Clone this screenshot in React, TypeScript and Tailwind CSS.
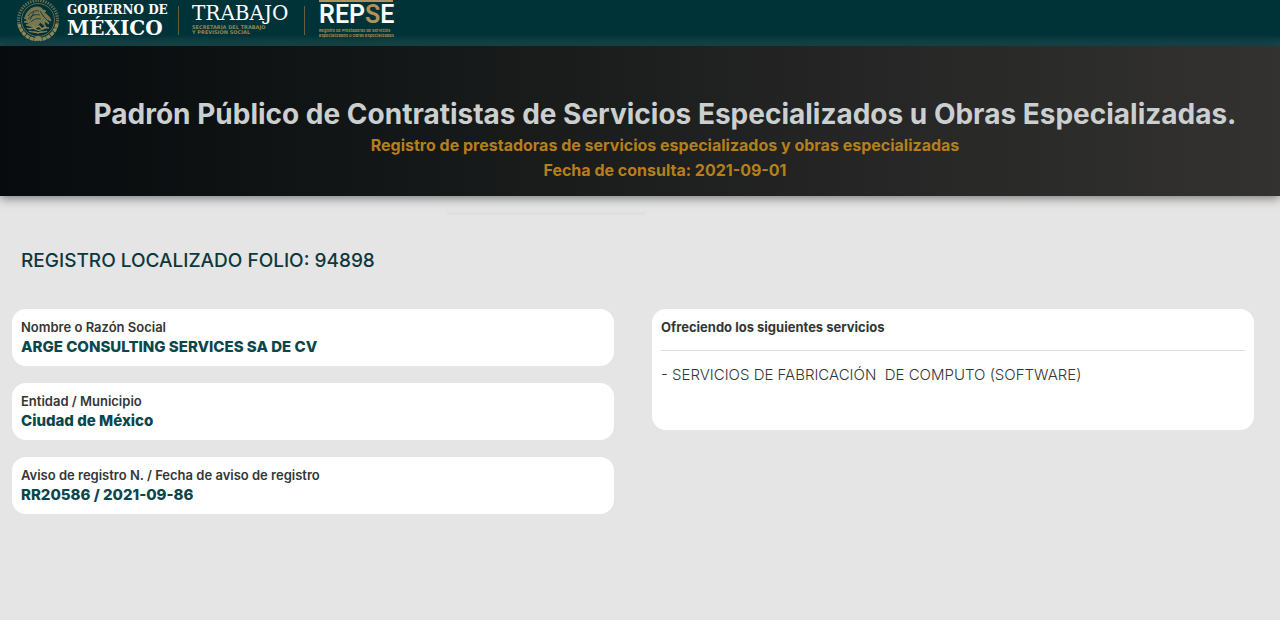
import React from 'react';

interface Field {
  label: string;
  value: string;
}

const fields: Field[] = [
  { label: 'Nombre o Razón Social', value: 'ARGE CONSULTING SERVICES SA DE CV' },
  { label: 'Entidad / Municipio', value: 'Ciudad de México' },
  { label: 'Aviso de registro N. / Fecha de aviso de registro', value: 'RR20586 / 2021-09-86' },
];

const services = ['SERVICIOS DE FABRICACIÓN\u00a0 DE COMPUTO (SOFTWARE)'];

function Seal() {
  return (
    <svg viewBox="0 0 44 44" className="size-11 shrink-0" fill="none" stroke="#8c8455" aria-hidden="true">
      <circle cx="22" cy="22" r="19.5" strokeWidth="3" strokeDasharray="1.4 1.2" opacity="0.75" />
      <circle cx="22" cy="22" r="16.5" strokeWidth="0.7" />
      {/* laurel */}
      <path d="M3 26c2 9 9 15 17 15.500M41 26c-2 9-9 15-17 15.500" strokeWidth="3.400" strokeDasharray="3.600 1" />
      <path d="M19 40l3-2 3 2-3 3z" fill="#8c8455" />
      {/* eagle */}
      <path
        d="M9 20c1-6 6-11 12-11 3 0 5 1 6 3l3 1-2 2c3 1 6 4 7 8l-4-2 2 5-5-3 1 5-5-4c-1 3-4 5-7 5l-7-2 4-2-6-1 4-2-4-2z"
        fill="#8c8455"
        opacity="0.85"
      />
      <path d="M12 18c3-4 7-6 11-5M12 21c4-4 8-5 12-4M15 24c3-3 6-4 10-3M24 13l4 6 5 5M18 14l-4 8" stroke="#12393b" strokeWidth="0.9" />
      <path d="M11 30c3 2 5-1 8 1s5 2 8 0 4-1 6-1M13 33c3 2 6 0 9 2 3-2 6 0 9-2M16 27l3 3 4-2 3 3 4-3" strokeWidth="1.500" />
    </svg>
  );
}

function Divider() {
  return <span className="h-[29px] w-px bg-[#62603f]" />;
}

function Brand() {
  return (
    <header className="h-[46px] bg-linear-to-b from-[#003338] from-75% to-[#1d4c50] text-white">
      <div className="flex h-10 items-center pl-4">
        <Seal />
        <div className="ml-[7px] w-[97px] whitespace-nowrap font-['DejaVu_Serif',serif] font-bold">
          <p className="text-[12px] leading-4">GOBIERNO DE</p>
          <p className="text-[20px] leading-5">MÉXICO</p>
        </div>
        <div className="ml-[14px] flex items-center">
          <Divider />
        </div>
        <div className="ml-[13px] w-[100px] whitespace-nowrap pb-1">
          <p className="font-['DejaVu_Serif',serif] text-[20px] leading-6">TRABAJO</p>
          <p className="font-['DejaVu_Sans',sans-serif] text-[5px] font-bold leading-[5px] text-[#8c8455]">
            SECRETARÍA DEL TRABAJO
            <br />
            Y PREVISIÓN SOCIAL
          </p>
        </div>
        <div className="ml-3 flex items-center">
          <Divider />
        </div>
        <div className="ml-[14px] w-[74px] whitespace-nowrap border-t-2 border-[#b0935b] pb-0.5">
          <p className="font-[Roboto,sans-serif] text-[25px] font-semibold leading-[26px]">
            REP<span className="text-[#b0935b]">S</span>E
          </p>
          <p className="font-[Inter,sans-serif] text-[4px] font-semibold leading-[5px] text-[#b0935b]">
            Registro de Prestadoras de Servicios
            <br />
            Especializados u Obras Especializadas
          </p>
        </div>
      </div>
    </header>
  );
}

export default function App() {
  return (
    <div className="min-h-screen bg-[#e5e5e5] font-[Inter,sans-serif]">
      <Brand />

      <section className="h-[150px] bg-linear-to-r from-[#070b0d] via-[#1d1f1e] to-[#333231] pl-[50px] pt-[50px] text-center font-bold shadow-[0_2px_10px_rgba(0,0,0,0.5)]">
        <h1 className="whitespace-nowrap text-[28px] leading-[37px] text-[#cccfcf]">
          Padrón Público de Contratistas de Servicios Especializados u Obras Especializadas.
        </h1>
        <p className="text-[16px] leading-[25px] text-[#b57f1b]">
          Registro de prestadoras de servicios especializados y obras especializadas
        </p>
        <p className="text-[16px] leading-[25px] text-[#b57f1b]">Fecha de consulta: 2021-09-01</p>
      </section>

      <main className="pb-10 pl-3 pr-[26px] pt-4">
        <div className="ml-[435px] h-[3px] w-[198px] bg-[#dfdfdf]" />
        <h2 className="mt-8 pl-[9px] text-[19px] font-medium leading-7 text-[#0e383d]">
          REGISTRO LOCALIZADO FOLIO: 94898
        </h2>

        <div className="mt-[34px] grid grid-cols-2 items-start gap-[38px]">
          <dl className="flex flex-col gap-[17px]">
            {fields.map((field) => (
              <div key={field.label} className="rounded-[14px] bg-white px-[9px] pb-[9px] pt-2 leading-5">
                <dt className="text-[13px] font-semibold text-[#333735]">{field.label}</dt>
                <dd className="text-[15px] font-extrabold text-[#0c464d]">{field.value}</dd>
              </div>
            ))}
          </dl>

          <section className="min-h-[121px] rounded-[14px] bg-white px-[9px] pt-2">
            <h3 className="text-[13px] font-bold leading-5 text-[#333735]">Ofreciendo los siguientes servicios</h3>
            <hr className="mb-[14px] mt-[13px] border-[#dcdcdc]" />
            {services.map((service) => (
              <p key={service} className="text-[15px] font-light leading-5 text-[#333735]">
                - {service}
              </p>
            ))}
          </section>
        </div>
      </main>
    </div>
  );
}
